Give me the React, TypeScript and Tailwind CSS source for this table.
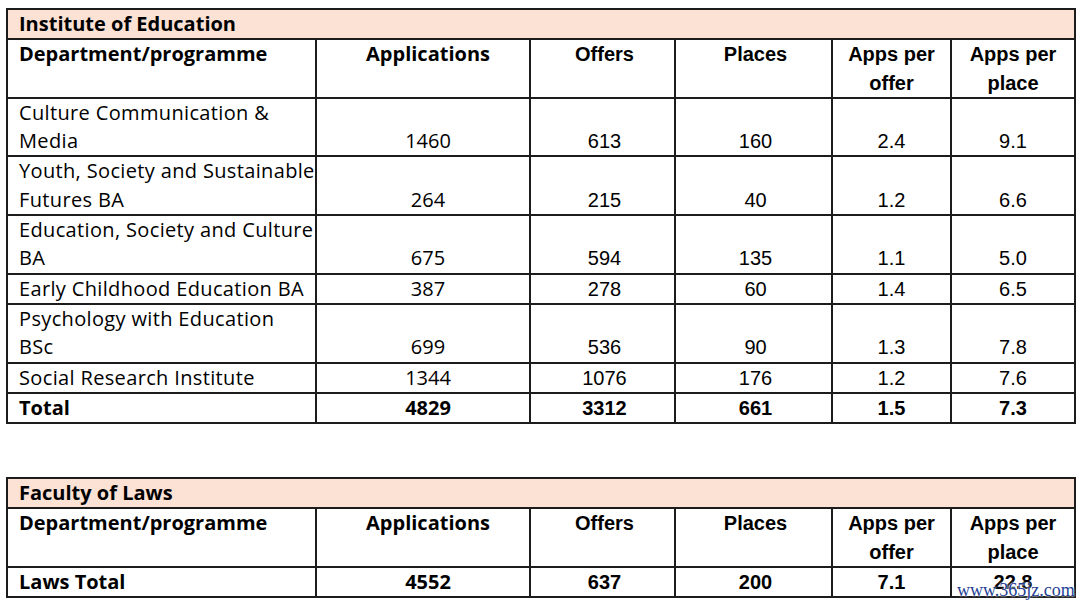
import React from "react";

type Row = {
  name: React.ReactNode;
  apps: string;
  offers: string;
  places: string;
  perOffer: string;
  perPlace: string;
  bold?: boolean;
};

const IOE_ROWS: Row[] = [
  { name: <>Culture Communication &amp;<br />Media</>, apps: "1460", offers: "613", places: "160", perOffer: "2.4", perPlace: "9.1" },
  { name: <>Youth, Society and Sustainable<br />Futures BA</>, apps: "264", offers: "215", places: "40", perOffer: "1.2", perPlace: "6.6" },
  { name: <>Education, Society and Culture<br />BA</>, apps: "675", offers: "594", places: "135", perOffer: "1.1", perPlace: "5.0" },
  { name: "Early Childhood Education BA", apps: "387", offers: "278", places: "60", perOffer: "1.4", perPlace: "6.5" },
  { name: <>Psychology with Education<br />BSc</>, apps: "699", offers: "536", places: "90", perOffer: "1.3", perPlace: "7.8" },
  { name: "Social Research Institute", apps: "1344", offers: "1076", places: "176", perOffer: "1.2", perPlace: "7.6" },
  { name: "Total", apps: "4829", offers: "3312", places: "661", perOffer: "1.5", perPlace: "7.3", bold: true },
];

const LAWS_ROWS: Row[] = [
  { name: "Laws Total", apps: "4552", offers: "637", places: "200", perOffer: "7.1", perPlace: "22.8", bold: true },
];

const aptos = "font-['Open_Sans','Noto_Sans',sans-serif]";
const arial = "font-['Liberation_Sans',Arial,sans-serif]";
const cell = "border-2 border-[#1c1c1c] p-0 leading-[28.3px] text-[20px] text-black";

function AdmissionsTable({ title, rows }: { title: string; rows: Row[] }) {
  return (
    <table className="table-fixed border-collapse w-[1068px]">
      <colgroup>
        <col className="w-[309px]" />
        <col className="w-[214px]" />
        <col className="w-[145px]" />
        <col className="w-[157px]" />
        <col className="w-[119px]" />
        <col className="w-[124px]" />
      </colgroup>
      <tbody>
        <tr>
          <td colSpan={6} className={`${cell} ${aptos} bg-[#fbe2d5] font-bold pl-[11px]`}>
            {title}
          </td>
        </tr>
        <tr>
          <td className={`${cell} ${aptos} font-bold align-top pl-[11px]`}>
            Department/programme
            <br />
            &nbsp;
          </td>
          <td className={`${cell} ${aptos} font-bold align-top text-center pl-[10px]`}>Applications</td>
          <td className={`${cell} ${arial} font-bold align-top text-center pl-[4px]`}>Offers</td>
          <td className={`${cell} ${arial} font-bold align-top text-center pl-[4px]`}>Places</td>
          <td className={`${cell} ${arial} font-bold align-top text-center`}>
            Apps per
            <br />
            offer
          </td>
          <td className={`${cell} ${arial} font-bold align-top text-center`}>
            Apps per
            <br />
            place
          </td>
        </tr>
        {rows.map((r, i) => {
          const weight = r.bold ? "font-bold" : "font-normal tracking-[0.35px]";
          const numWeight = r.bold ? "font-bold" : "font-normal";
          return (
            <tr key={i}>
              <td className={`${cell} ${aptos} ${weight} align-bottom pl-[11px] whitespace-nowrap`}>{r.name}</td>
              <td className={`${cell} ${aptos} ${numWeight} align-bottom text-center pl-[10px]`}>{r.apps}</td>
              <td className={`${cell} ${arial} ${numWeight} align-bottom text-center pl-[4px]`}>{r.offers}</td>
              <td className={`${cell} ${arial} ${numWeight} align-bottom text-center pl-[4px]`}>{r.places}</td>
              <td className={`${cell} ${arial} ${numWeight} align-bottom text-center`}>{r.perOffer}</td>
              <td className={`${cell} ${arial} ${numWeight} align-bottom text-center`}>{r.perPlace}</td>
            </tr>
          );
        })}
      </tbody>
    </table>
  );
}

export default function App() {
  return (
    <div className="relative w-[1080px] h-[607px] bg-white overflow-hidden pt-[8px] pl-[6px]">
      <div className="flex flex-col gap-[53px]">
        <AdmissionsTable title="Institute of Education" rows={IOE_ROWS} />
        <AdmissionsTable title="Faculty of Laws" rows={LAWS_ROWS} />
      </div>
      {/* site watermark */}
      <span className="absolute left-[957px] top-[580px] font-['Liberation_Serif',serif] text-[18px] leading-[20px] text-[#1f3f94] [text-shadow:0_0_2px_#fff,0_0_2px_#fff]">
        www.365jz.com
      </span>
    </div>
  );
}
